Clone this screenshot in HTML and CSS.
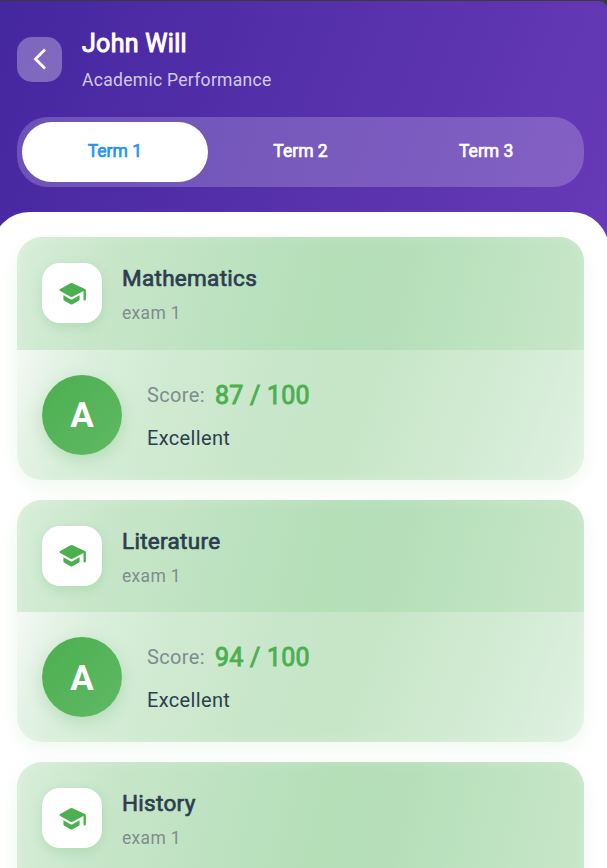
FILE: index.html
```html
<!DOCTYPE html>
<html lang="en">
<head>
<meta charset="utf-8">
<title>Academic Performance</title>
<link rel="stylesheet" href="styles.css">
</head>
<body>
<svg class="defs" width="0" height="0"><symbol id="cap" viewBox="0 0 28 24"><path fill="currentColor" d="M4.400 13.300v3.900q0 1 .9 1.500l6.200 3.500q1 .5 2 0l6.200-3.500q.9-.5.9-1.500v-3.900l-7.100 4q-1 .5-2 0zM11.500 1.300 1.200 6.900q-1.500 1.100 0 2.200l10.300 5.700q1 .5 2 0L24.500 9v8.300q0 1.200 1.200 1.200t1.200-1.200V8.500q0-1.100-.9-1.600L13.500 1.300q-1-.5-2 0z"/></symbol></svg>
<div class="app">
  <header class="top">
    <div class="bar">
      <button class="back" aria-label="Back"><svg width="14" height="22" viewBox="0 0 14 22"><path d="M12 1.500 2.500 11l9.500 9.500" fill="none" stroke="#fff" stroke-width="2.800"/></svg></button>
      <div><h1>John Will</h1><p class="sub">Academic Performance</p></div>
    </div>
    <nav class="tabs"><span class="tab active">Term 1</span><span class="tab">Term 2</span><span class="tab">Term 3</span></nav>
  </header>
  <main class="sheet">
    <section class="card">
      <div class="head"><div class="tile"><svg width="28" height="24"><use href="#cap"/></svg></div><div><h2>Mathematics</h2><p class="exam">exam 1</p></div></div>
      <div class="body"><div class="grade"><span>A</span></div><div><p class="score"><span class="label">Score:</span><b>87 / 100</b></p><p class="remark">Excellent</p></div></div>
    </section>
    <section class="card">
      <div class="head"><div class="tile"><svg width="28" height="24"><use href="#cap"/></svg></div><div><h2>Literature</h2><p class="exam">exam 1</p></div></div>
      <div class="body"><div class="grade"><span>A</span></div><div><p class="score"><span class="label">Score:</span><b>94 / 100</b></p><p class="remark">Excellent</p></div></div>
    </section>
    <section class="card">
      <div class="head"><div class="tile"><svg width="28" height="24"><use href="#cap"/></svg></div><div><h2>History</h2><p class="exam">exam 1</p></div></div>
      <div class="body"></div>
    </section>
  </main>
</div>
</body>
</html>
```
FILE: styles.css
```css
* { box-sizing: border-box; margin: 0; padding: 0; }
html, body { height: 868px; overflow: hidden; background: #3a3a3c; }
body { font-family: Roboto, "Liberation Sans", sans-serif; padding-top: 1px; }
.defs { display: block; height: 0; }
.app { height: 867px; overflow: hidden; border-top-right-radius: 8px; background: linear-gradient(111deg, #4527a0, #673ab7) top / 100% 240px no-repeat #fff; }
.top { height: 211px; padding: 25px 23px 0 17px; }
.bar { display: flex; gap: 20px; height: 91px; }
.back { width: 45px; height: 45px; margin-top: 11px; border: 0; border-radius: 15px; background: rgba(255,255,255,.3); display: flex; align-items: center; justify-content: center; }
.back svg { margin-top: -1px; }
h1 { margin-top: 1px; font-size: 25px; line-height: 34px; letter-spacing: .3px; font-weight: 400; color: #fff; -webkit-text-stroke: 1px #fff; }
.sub { font-size: 17.5px; line-height: 22px; margin-top: 8px; letter-spacing: .3px; color: rgba(255,255,255,.75); }
.tabs { display: flex; height: 70px; padding: 5px; border-radius: 31px; background: rgba(255,255,255,.2); }
.tab { flex: 1; display: flex; align-items: center; justify-content: center; padding-bottom: 3px; font-size: 17.5px; color: #fff; -webkit-text-stroke: .7px currentColor; }
.active { background: #fff; color: #2196f3; border-radius: 30px; }
.sheet { height: 656px; margin: 0 -2px 0 -8px; padding: 25px 25px 0; background: #fff; border-radius: 37.5px 37.5px 0 0; display: flex; flex-direction: column; gap: 20px; overflow: hidden; }
.card { flex: 0 0 242.500px; border-radius: 25px; overflow: hidden; position: relative; background: linear-gradient(111deg, #f3f9f4 7%, #e4f2e5 13%, #d8eeda 21%, #d0ead2 32%, #c8e6c9 48%, #c7e6c8 62%, #cee9cf 75%, #d7edd9 89%, #e2f2e3 100%); box-shadow: 0 6px 18px rgba(76,175,80,.09); }
.card::after { content: ""; position: absolute; inset: 0; border-radius: inherit; box-shadow: inset 0 0 14px rgba(255,255,255,.2); pointer-events: none; }
.head { height: 112.500px; padding: 26px 25px 0; display: flex; gap: 20px; background: linear-gradient(103deg, #d8eeda 0%, #c8e6ca 16%, #bde2c0 37%, #b4dfb7 54%, #b6dfb9 67%, #bee3c0 83%, #c8e6c9 100%); }
.tile { width: 60px; height: 60px; border-radius: 18px; background: #fff; color: #4caf50; box-shadow: 0 4px 12px rgba(76,175,80,.2); display: flex; align-items: center; justify-content: center; }
.tile svg { display: block; margin: 1px 0 0 1px; }
h2 { font-size: 22.500px; line-height: 30px; letter-spacing: .3px; font-weight: 400; color: #2c3e50; -webkit-text-stroke: .7px #2c3e50; }
.exam { font-size: 17.500px; line-height: 22px; margin-top: 9px; letter-spacing: .3px; color: #7f8c8d; }
.body { height: 130px; padding: 25px; display: flex; gap: 25px; }
.grade { width: 80px; height: 80px; border-radius: 50%; background: linear-gradient(135deg, #4caf50, #60b964); color: #fff; font-size: 35px; font-weight: 700; display: flex; align-items: center; justify-content: center; box-shadow: 0 5px 15px rgba(76,175,80,.25); }
.grade span { padding-top: 2px; }
.score { height: 40px; display: flex; gap: 10px; align-items: center; font-size: 20px; letter-spacing: .35px; color: #7f8c8d; }
.score b { padding-top: 1px; font-size: 25px; letter-spacing: .25px; font-weight: 400; color: #4caf50; -webkit-text-stroke: .9px #4caf50; }
.remark { font-size: 20px; line-height: 26px; margin-top: 10px; letter-spacing: .35px; color: #2c3e50; }
```
